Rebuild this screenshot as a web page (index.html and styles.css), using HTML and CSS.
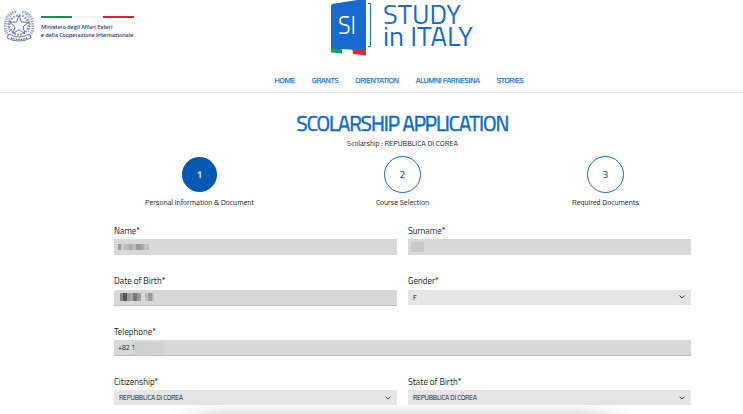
FILE: index.html
```html
<!DOCTYPE html>
<html lang="en">
<head>
  <meta charset="UTF-8">
  <meta name="viewport" content="width=device-width, initial-scale=1.0">
  <title>Study in Italy - Scolarship Application</title>
  <link rel="stylesheet" href="styles.css">
</head>

<body>
  <!-- Header -->
  <header class="header">
    <div class="ministry">
      <svg class="emblem" viewBox="0 0 30 34" width="30" height="34" fill="none" stroke="#536092">
        <path d="M12 3C5 3 1 9 1 17c0 7 4 12 10 14M18 3c7 0 11 6 11 14 0 7-4 12-10 14" stroke-width="3" stroke-dasharray="1.6 .8" opacity=".5"/>
        <path d="M8 5C4 10 3 17 6 24M22 5c4 5 5 12 2 19" stroke-width="1.6" stroke-dasharray="1.5 1" opacity=".5"/>
        <circle cx="15" cy="16" r="9.6" stroke-width="2.2" stroke-dasharray="1.8 1.2" opacity=".65"/>
        <path d="M15 6.500l2.500 6.500 7 .3-5.500 4.400 1.900 6.800L15 20.700l-5.900 3.800 1.900-6.800-5.500-4.400 7-.3z" fill="#fff" stroke-width=".9"/>
        <path d="M5 25q10 6 20 0l2 4q-12 6-24 0z" fill="#fff" stroke-width=".8"/>
        <path d="M7 29q8 3 16 0" stroke-width="1.400" stroke-dasharray="1 .7"/>
      </svg>
      <div class="ministry-info">
        <div class="flag"><i></i><i></i><i></i></div>
        <p>Ministero degli Affari Esteri</p>
        <p>e della Cooperazione Internazionale</p>
      </div>
    </div>
    <svg class="logo" viewBox="0 0 145 56" width="145" height="56">
      <path d="M1 46h11v7.500l-11-1z" fill="#15a35a"/>
      <path d="M22 46h14v9.500l-13-1.500z" fill="#e5242e"/>
      <path d="M1 6Q1 4.200 3 3.800L34-1q2 0 2 2v49.500L3 48.500q-2 0-2-2z" fill="#176bce"/>
      <path d="M38 3.500h2.500v43H38" fill="none" stroke="#176bce"/>
      <text x="8" y="34" textLength="18" lengthAdjust="spacingAndGlyphs" class="logo-si">SI</text>
      <text x="53" y="23.500" textLength="78" lengthAdjust="spacingAndGlyphs" class="logo-text">STUDY</text>
      <text x="53" y="45.500" textLength="90" lengthAdjust="spacingAndGlyphs" class="logo-text">in ITALY</text>
    </svg>
    <nav class="menu">
      <a>HOME</a>
      <a>GRANTS</a>
      <a>ORIENTATION</a>
      <a>ALUMNI FARNESINA</a>
      <a>STORIES</a>
    </nav>
  </header>

  <!-- Application -->
  <main>
    <h1>SCOLARSHIP APPLICATION</h1>
    <p class="subtitle">Scolarship : REPUBBLICA DI COREA</p>

    <div class="steps">
      <div class="step active"><b>1</b><span>Personal Information &amp; Document</span></div>
      <div class="step"><b>2</b><span>Course Selection</span></div>
      <div class="step"><b>3</b><span>Required Documents</span></div>
    </div>

    <form class="form">
      <div class="field">
        <label>Name*</label>
        <div class="input"><span class="hidden-name"></span></div>
      </div>
      <div class="field">
        <label>Surname*</label>
        <div class="input"><span class="hidden-surname"></span></div>
      </div>
      <div class="field">
        <label>Date of Birth*</label>
        <div class="input date"><span class="hidden-date"></span></div>
      </div>
      <div class="field">
        <label>Gender*</label>
        <div class="select">F<svg viewBox="0 0 6 4" width="6" height="4"><path d="M.5.700L3 3 5.500.700"/></svg></div>
      </div>
      <div class="field wide">
        <label>Telephone*</label>
        <div class="input phone">+82 1<span class="hidden-phone"></span></div>
      </div>
      <div class="field">
        <label>Citizenship*</label>
        <div class="select">REPUBBLICA DI COREA<svg viewBox="0 0 6 4" width="6" height="4"><path d="M.5.700L3 3 5.500.700"/></svg></div>
      </div>
      <div class="field">
        <label>State of Birth*</label>
        <div class="select">REPUBBLICA DI COREA<svg viewBox="0 0 6 4" width="6" height="4"><path d="M.5.700L3 3 5.500.700"/></svg></div>
      </div>
    </form>
  </main>
  <div class="bottom-shadow"></div>
</body>
</html>
```
FILE: styles.css
```css
* {
  box-sizing: border-box;
}

body {
  margin: 0;
  height: 414px;
  overflow: hidden;
  position: relative;
  background: #fff;
  color: #222;
  font-family: "Titillium Web", "Noto Sans", sans-serif;
}

p, h1 {
  margin: 0;
}

/* Header */
.header {
  display: grid;
  grid-template-columns: 330px 145px 1fr;
  grid-template-rows: 56px 36px;
  height: 93px;
  border-bottom: 1px solid #e6e6e6;
}

.ministry {
  display: flex;
  padding: 9px 0 0 4px;
}

.ministry-info {
  padding: 7px 0 0 7px;
  color: #3a4573;
  font-size: 6.100px;
  font-weight: 600;
  line-height: 7.500px;
  white-space: nowrap;
}

.flag {
  display: flex;
  width: 93px;
  height: 2px;
  margin-bottom: 5px;
}

.flag i {
  flex: 1;
  background: #15914f;
}

.flag i:nth-child(2) {
  background: #f2f2f2;
}

.flag i:nth-child(3) {
  background: #d8232e;
}

.logo-text {
  font-size: 27px;
  font-weight: 400;
  fill: #176bce;
}

.logo-si {
  font-size: 25px;
  font-weight: 300;
  fill: #fff;
}

.menu {
  grid-column: 1 / 4;
  display: flex;
  justify-content: center;
  gap: 17px;
  padding: 18px 0 0 55px;
  font-size: 8px;
  line-height: 13px;
  letter-spacing: -.34px;
  -webkit-text-stroke: .25px #1f73d2;
  color: #1f73d2;
}

/* Title */
h1 {
  padding-left: 62px;
  margin-top: 17px;
  height: 28px;
  line-height: 28px;
  font-size: 20.500px;
  font-weight: 400;
  letter-spacing: -1px;
  -webkit-text-stroke: .5px #0b69d0;
  text-align: center;
  color: #0b69d0;
}

.subtitle {
  padding-left: 62px;
  line-height: 12px;
  font-size: 7.500px;
  text-align: center;
}

/* Steps */
.steps {
  display: grid;
  grid-template-columns: repeat(3, 203px);
  margin: 6px 0 0 98px;
}

.step {
  display: flex;
  flex-direction: column;
  align-items: center;
}

.step b {
  width: 37px;
  height: 37px;
  border: 1px solid #1768c6;
  border-radius: 50%;
  color: #1768c6;
  font-size: 9.500px;
  line-height: 35px;
  font-weight: 400;
  -webkit-text-stroke: .25px;
  text-align: center;
}

.step.active b {
  border-color: transparent;
  background: #0159b4;
  background-clip: padding-box;
  color: #fff;
}

.step span {
  margin-top: 3px;
  font-size: 7.600px;
  line-height: 12px;
}

/* Form */
.form {
  display: grid;
  grid-template-columns: 283px 283px;
  grid-auto-rows: 50.400px;
  column-gap: 11px;
  margin: 16px 0 0 114px;
}

.wide {
  grid-column: 1 / 3;
}

.field label {
  display: block;
  height: 15.300px;
  font-size: 8.900px;
  line-height: 14px;
}

.input, .select {
  display: flex;
  align-items: center;
  font-size: 7px;
  letter-spacing: -.26px;
  white-space: nowrap;
}

.input {
  height: 16px;
  padding-left: 4px;
  background: #d7d8da;
}

.select {
  height: 15px;
  padding: 0 6px 0 5px;
  justify-content: space-between;
  background: #e5e5e5;
}

.select svg {
  fill: none;
  stroke: #444;
  stroke-width: 1;
}

.date, .phone {
  border-bottom: 1px solid #b3bdcc;
}

.phone {
  letter-spacing: 0;
}

/* Masked values */
.hidden-name, .hidden-date {
  filter: blur(.6px);
}

.hidden-name {
  width: 31px;
  height: 6px;
  background: linear-gradient(90deg, #999 0 3px, #ccc 3px 6px, #bbb 6px 11px, #aaa 11px 14px, #bbb 14px 18px, #999 18px 23px, #aaa 23px 26px, #bdbdbf 26px);
}

.hidden-surname {
  width: 13px;
  height: 10px;
  margin-left: -1px;
  background: #c7c8ca;
}

.hidden-date {
  width: 34px;
  height: 8px;
  margin-left: 2px;
  background: linear-gradient(90deg, #888 0 3px, #555 3px 7px, #999 7px 10px, #aaa 10px 13px, #777 13px 17px, #999 17px 21px, #d7d8da 21px 25px, #bbb 25px 28px, #999 28px 32px, #bbb 32px);
}

.hidden-phone {
  width: 33px;
  height: 12px;
  background: linear-gradient(90deg, #cdced0, #d0d1d3 80%, #d7d8da);
}

/* Shadow of the bar under the page */
.bottom-shadow {
  position: absolute;
  left: 170px;
  bottom: 0;
  width: 465px;
  height: 10px;
  background: linear-gradient(transparent, rgba(0, 0, 0, .11));
  -webkit-mask-image: linear-gradient(90deg, transparent, #000 12%, #000 88%, transparent);
  mask-image: linear-gradient(90deg, transparent, #000 12%, #000 88%, transparent);
}
```
